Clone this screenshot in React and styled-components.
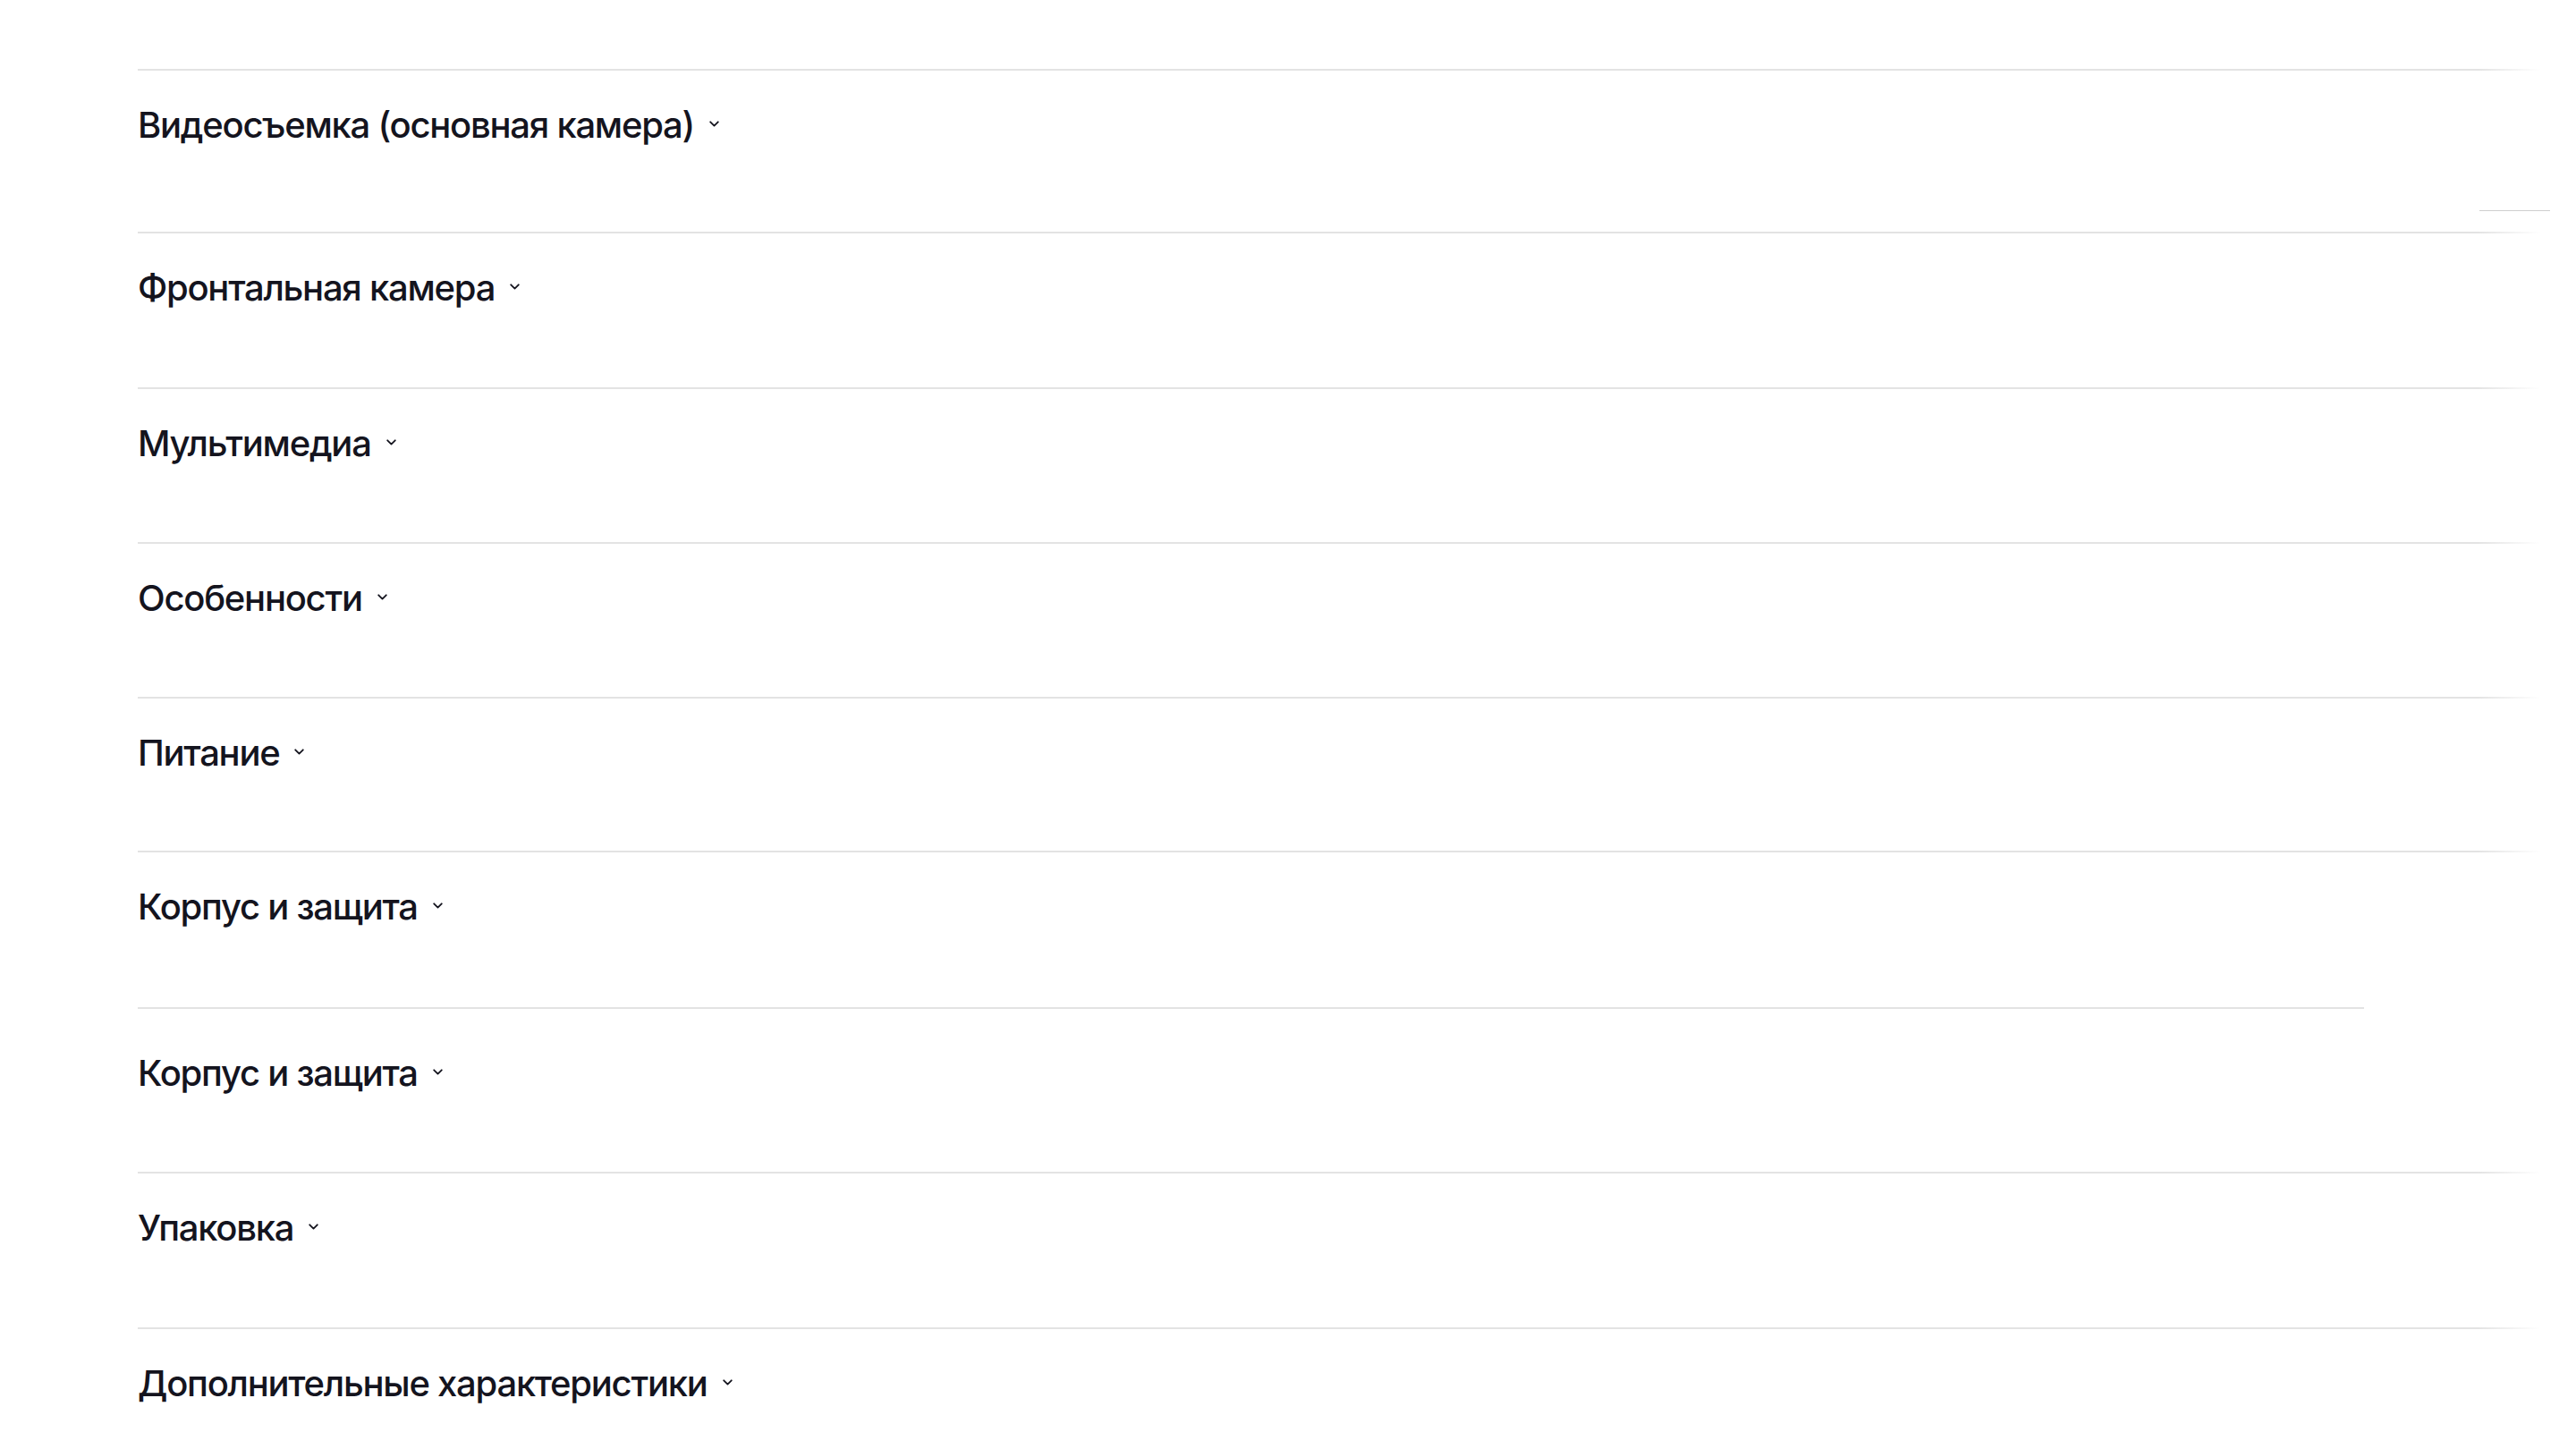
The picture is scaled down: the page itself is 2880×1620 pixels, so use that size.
import styled, { createGlobalStyle } from "styled-components";

const GlobalStyle = createGlobalStyle`
  html, body {
    margin: 0;
    padding: 0;
    background: #ffffff;
  }
  body {
    font-family: "Inter", "Roboto", "Liberation Sans", sans-serif;
  }
`;

const Page = styled.div`
  width: 2880px;
  height: 1620px;
  overflow: hidden;
  box-sizing: border-box;
  padding: 77px 29px 0 154px;
  display: flex;
  flex-direction: column;
`;

const Section = styled.section`
  display: flex;
  flex-direction: column;
  padding-bottom: ${(props) => props.$bottom}px;
`;

const Divider = styled.div`
  height: 2px;
  width: ${(props) => (props.$short ? "2489px" : "100%")};
  background: ${(props) =>
    props.$short
      ? "#e3e3e3"
      : "linear-gradient(to right, #e3e3e3 0%, #e3e3e3 97%, rgba(227,227,227,0) 99.6%)"};
`;

const Header = styled.button`
  display: flex;
  align-items: center;
  gap: 17px;
  margin-top: ${(props) => props.$top}px;
  padding: 0;
  border: none;
  background: none;
  cursor: pointer;
  align-self: flex-start;
  font-family: inherit;
`;

const Title = styled.span`
  font-size: 40px;
  line-height: 48px;
  font-weight: 500;
  color: #14141e;
  letter-spacing: -1.25px;
`;

const Chevron = styled.svg`
  width: 11px;
  height: 7px;
  margin-top: -3px;
  flex-shrink: 0;
`;

const Tick = styled.div`
  align-self: flex-end;
  width: 79px;
  height: 1px;
  margin-top: 71px;
  margin-bottom: -1px;
  background: #cfcfcf;
`;

const sections = [
  { title: "Видеосъемка (основная камера)", top: 37, bottom: 24, tick: true },
  { title: "Фронтальная камера", top: 37, bottom: 87 },
  { title: "Мультимедиа", top: 37, bottom: 86 },
  { title: "Особенности", top: 37, bottom: 86 },
  { title: "Питание", top: 37, bottom: 85 },
  { title: "Корпус и защита", top: 37, bottom: 88 },
  { title: "Корпус и защита", top: 48, bottom: 86, short: true },
  { title: "Упаковка", top: 37, bottom: 87 },
  { title: "Дополнительные характеристики", top: 37, bottom: 86 },
];

const Arrow = () => (
  <Chevron viewBox="0 0 11 7" fill="none">
    <path
      d="M1.2 1.3 L5.5 5.6 L9.8 1.3"
      stroke="#14141e"
      strokeWidth="1.8"
      strokeLinecap="round"
      strokeLinejoin="round"
    />
  </Chevron>
);

const App = () => {
  return (
    <>
      <GlobalStyle />
      <Page>
        {sections.map((s, i) => (
          <Section key={i} $bottom={s.bottom}>
            <Divider $short={s.short} />
            <Header $top={s.top}>
              <Title>{s.title}</Title>
              <Arrow />
            </Header>
            {s.tick && <Tick />}
          </Section>
        ))}
      </Page>
    </>
  );
};

export default App;
